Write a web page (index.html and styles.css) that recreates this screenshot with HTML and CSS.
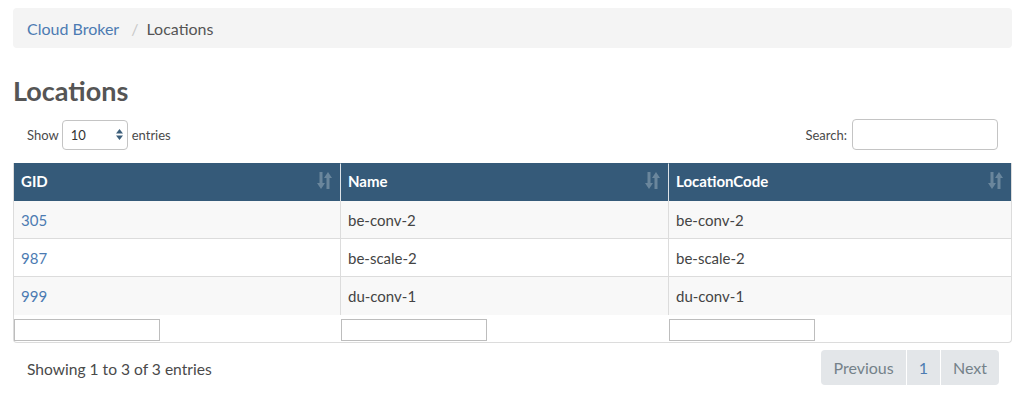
FILE: index.html
```html
<!DOCTYPE html>
<html>
<head>
<meta charset="utf-8">
<link rel="stylesheet" href="styles.css">
</head>
<body>
<div class="page">
  <nav class="breadcrumb">
    <a href="#" class="crumb-link">Cloud Broker</a>
    <span class="crumb-sep">/</span>
    <span class="crumb-active">Locations</span>
  </nav>
  <h1 class="title">Locations</h1>
  <div class="controls">
    <label class="length">Show
      <span class="select"><span class="select-val">10</span>
        <svg class="select-arrows" width="7" height="11" viewBox="0 0 7 11"><path d="M3.5 0 L7 4.5 L0 4.5 Z M3.5 11 L7 6.5 L0 6.5 Z" fill="#3c5e7a"/></svg>
      </span>
      entries</label>
    <label class="search">Search: <span class="search-input"></span></label>
  </div>
  <table class="grid">
    <thead>
      <tr>
        <th><div class="th-in"><span>GID</span><svg class="sort" width="15" height="17" viewBox="0 0 15 17"><path d="M2.5 0h3v11h2.5l-4 6l-4-6h2.5z M9.5 17h3v-11h2.5l-4-6l-4 6h2.5z" fill="#6a869c"/></svg></div></th>
        <th><div class="th-in"><span>Name</span><svg class="sort" width="15" height="17" viewBox="0 0 15 17"><path d="M2.5 0h3v11h2.5l-4 6l-4-6h2.5z M9.5 17h3v-11h2.5l-4-6l-4 6h2.5z" fill="#6a869c"/></svg></div></th>
        <th class="last"><div class="th-in"><span>LocationCode</span><svg class="sort" width="15" height="17" viewBox="0 0 15 17"><path d="M2.5 0h3v11h2.5l-4 6l-4-6h2.5z M9.5 17h3v-11h2.5l-4-6l-4 6h2.5z" fill="#6a869c"/></svg></div></th>
      </tr>
    </thead>
    <tbody>
      <tr class="odd"><td><a href="#" class="lnk">305</a></td><td>be-conv-2</td><td class="last">be-conv-2</td></tr>
      <tr><td><a href="#" class="lnk">987</a></td><td>be-scale-2</td><td class="last">be-scale-2</td></tr>
      <tr class="odd"><td><a href="#" class="lnk">999</a></td><td>du-conv-1</td><td class="last">du-conv-1</td></tr>
    </tbody>
    <tfoot>
      <tr><td><span class="filter"></span></td><td><span class="filter"></span></td><td><span class="filter"></span></td></tr>
    </tfoot>
  </table>
  <div class="bottom">
    <div class="info">Showing 1 to 3 of 3 entries</div>
    <div class="pager">
      <span class="pg disabled">Previous</span>
      <span class="pg current">1</span>
      <span class="pg disabled">Next</span>
    </div>
  </div>
</div>
</body>
</html>
```

FILE: styles.css
```css
* { box-sizing: border-box; }
html, body { margin: 0; padding: 0; background: #fff; }
body {
  font-family: Lato, "Open Sans", "Liberation Sans", sans-serif;
  font-size: 15px;
  color: #4a4a4a;
}
.page { padding: 8px 18px 0 13px; width: 1030px; }
.breadcrumb {
  background: #f4f4f4;
  border-radius: 4px;
  height: 40px;
  padding: 0 14px;
  display: flex;
  align-items: center;
  font-size: 16px;
}
.crumb-link { color: #4c7bb2; text-decoration: none; }
.crumb-sep { color: #c8c8c8; padding: 0 8px 0 12px; }
.crumb-active { color: #555; }
.title {
  margin: 28px 0 0 0;
  font-size: 27px;
  font-weight: 700;
  color: #555;
  line-height: 30px;
  height: 30px;
}
.controls {
  display: flex;
  justify-content: space-between;
  align-items: center;
  padding: 0 14px;
  margin-top: 13px;
  font-size: 13px;
  color: #4a4a4a;
  height: 31px;
}
.length, .search { display: flex; align-items: center; }
.select {
  display: inline-flex;
  align-items: center;
  justify-content: space-between;
  width: 66px;
  height: 30px;
  border: 1px solid #c4c4c4;
  border-radius: 4px;
  margin: 0 4px 0 3px;
  padding: 0 4px 0 8px;
  font-size: 13px;
}
.select-val { color: #333; }
.search-input {
  display: inline-block;
  width: 146px;
  height: 31px;
  border: 1px solid #c4c4c4;
  border-radius: 4px;
  margin-left: 5px;
}
.grid {
  margin-top: 13px;
  width: 999px;
  border-collapse: separate;
  border-spacing: 0;
  border: 1px solid #dcdcdc;
  border-top: 0;
  border-radius: 0 0 4px 4px;
}
.grid th {
  background: #355a79;
  color: #fff;
  font-weight: 700;
  text-align: left;
  padding: 0 8px 4px 7px;
  height: 38px;
  border-right: 1px solid #dde3e8;
  border-top: 1px solid #355a79;
}
.grid th:first-child { width: 327px; }
.grid th:nth-child(2) { width: 328px; }
.grid th.last { border-right: 0; }
.th-in { display: flex; justify-content: space-between; align-items: center; }
.grid td {
  height: 38px;
  padding: 0 8px 0 7px;
  border-bottom: 1px solid #dcdcdc;
  border-right: 1px solid #dcdcdc;
  color: #444;
}
.grid td.last { border-right: 0; }
.grid tbody tr { background: #fff; }
.grid tbody tr.odd { background: #f8f8f8; }
.grid tbody tr:last-child td { border-bottom: 0; }
.lnk { color: #4c7bb2; text-decoration: none; }
.grid tfoot td {
  height: 27px;
  padding: 4px 0 0 0;
  border: 0;
  vertical-align: top;
}
.filter {
  display: block;
  width: 146px;
  height: 22px;
  border: 1px solid #bdbdbd;
  background: #fff;
}
.bottom {
  display: flex;
  justify-content: space-between;
  align-items: center;
  padding: 0 13px 0 14px;
  margin-top: 7px;
}
.info { font-size: 15.6px; color: #4a4a4a; margin-top: 3px; }
.pager {
  display: flex;
  border-radius: 4px;
  overflow: hidden;
  height: 35px;
}
.pg {
  display: flex;
  align-items: center;
  background: #e3e6e9;
  padding: 0 12px;
  font-size: 16px;
  border-left: 1px solid #fff;
}
.pg:first-child { border-left: 0; }
.pg.disabled { color: #75828a; }
.pg.current { color: #4c7bb2; }
```
